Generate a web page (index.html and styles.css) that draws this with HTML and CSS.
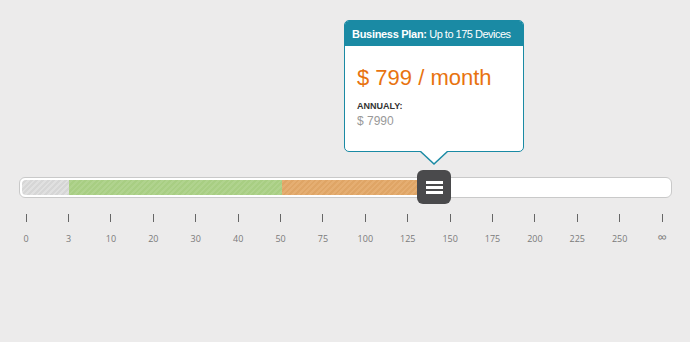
FILE: index.html
```html
<!DOCTYPE html>
<html lang="en">
<head>
  <meta charset="UTF-8" />
  <title>Pricing Slider</title>
  <link rel="stylesheet" href="styles.css">
</head>
<body>
  <div class="slider">
    <div class="track">
      <div class="fill fill-free"></div>
      <div class="fill fill-basic"></div>
      <div class="fill fill-business"></div>

      <div class="handle">
        <span></span><span></span><span></span>

        <!-- tooltip sits above the handle -->
        <div class="tip">
          <div class="tip-head"><b>Business Plan:</b> Up to 175 Devices</div>
          <div class="tip-body">
            <div class="price">$ 799 / month</div>
            <div class="annual-label">ANNUALY:</div>
            <div class="annual-price">$ 7990</div>
          </div>
        </div>
      </div>
    </div>

    <div class="scale">
      <div class="step"><i></i><span>0</span></div>
      <div class="step"><i></i><span>3</span></div>
      <div class="step"><i></i><span>10</span></div>
      <div class="step"><i></i><span>20</span></div>
      <div class="step"><i></i><span>30</span></div>
      <div class="step"><i></i><span>40</span></div>
      <div class="step"><i></i><span>50</span></div>
      <div class="step"><i></i><span>75</span></div>
      <div class="step"><i></i><span>100</span></div>
      <div class="step"><i></i><span>125</span></div>
      <div class="step"><i></i><span>150</span></div>
      <div class="step"><i></i><span>175</span></div>
      <div class="step"><i></i><span>200</span></div>
      <div class="step"><i></i><span>225</span></div>
      <div class="step"><i></i><span>250</span></div>
      <div class="step"><i></i><span class="inf">&infin;</span></div>
    </div>
  </div>
</body>
</html>
```

FILE: styles.css
```css
body {
  margin: 0;
  font-family: "Liberation Sans", Arial, sans-serif;
  background-color: #ecebeb;
  height: 342px;
  overflow: hidden;
}

.slider {
  padding-top: 177px;
}

.track {
  position: relative;
  display: flex;
  margin-left: 19px;
  width: 647px;
  height: 15px;
  padding: 2px;
  background: #fff;
  border: 1px solid #c9c9c9;
  border-radius: 6px;
}

.fill {
  height: 100%;
}

.fill-free {
  width: 47px;
  border-radius: 4px 0 0 4px;
  background: repeating-linear-gradient(-45deg, #d6d6d6 0 2px, #e0e0e0 2px 4px);
}

.fill-basic {
  width: 213px;
  background: repeating-linear-gradient(-45deg, #a8ce83 0 2px, #b0d38e 2px 4px);
}

.fill-business {
  width: 150px;
  background: repeating-linear-gradient(-45deg, #dfa566 0 2px, #e5ae72 2px 4px);
}

.handle {
  position: absolute;
  left: 397px;
  top: -8px;
  width: 34px;
  height: 34px;
  background: #4a4a4c;
  border-radius: 6px;
  display: flex;
  flex-direction: column;
  align-items: center;
  justify-content: center;
  gap: 2px;
}

.handle span {
  display: block;
  width: 17px;
  height: 3px;
  background: #fff;
}

.tip {
  position: absolute;
  left: -73px;
  bottom: 52px;
  width: 178px;
  height: 130px;
  background: #fff;
  border: 1px solid #1a8aa4;
  border-radius: 5px;
}

.tip::before,
.tip::after {
  content: "";
  position: absolute;
  left: 74px;
  width: 0;
  height: 0;
  border-left: 15px solid transparent;
  border-right: 15px solid transparent;
}

.tip::before {
  bottom: -14px;
  border-top: 14px solid #1a8aa4;
}

.tip::after {
  bottom: -12px;
  left: 75px;
  border-left-width: 14px;
  border-right-width: 14px;
  border-top: 13px solid #fff;
}

.tip-head {
  height: 25px;
  line-height: 27px;
  padding-left: 7px;
  background: #1a8aa4;
  color: #fff;
  font-size: 11px;
  letter-spacing: -0.5px;
  white-space: nowrap;
  border-radius: 4px 4px 0 0;
}

.tip-head b {
  letter-spacing: -0.3px;
}

.tip-body {
  padding: 19px 12px 0;
}

.price {
  color: #e8730f;
  font-size: 22px;
  line-height: 26px;
}

.annual-label {
  margin-top: 10px;
  color: #333;
  font-size: 9px;
  font-weight: bold;
}

.annual-price {
  margin-top: 3px;
  color: #999;
  font-size: 12px;
}

.scale {
  display: flex;
  margin-top: 16px;
  margin-left: 5px;
  font-family: "Open Sans", Lato, sans-serif;
}

.step {
  width: 42.4px;
  display: flex;
  flex-direction: column;
  align-items: center;
}

.step i {
  display: block;
  width: 1px;
  height: 8px;
  background: #666;
}

.step span {
  margin-top: 10px;
  color: #7a7a7a;
  font-size: 9px;
}

.step .inf {
  margin-top: 6px;
  font-size: 13px;
}
```
